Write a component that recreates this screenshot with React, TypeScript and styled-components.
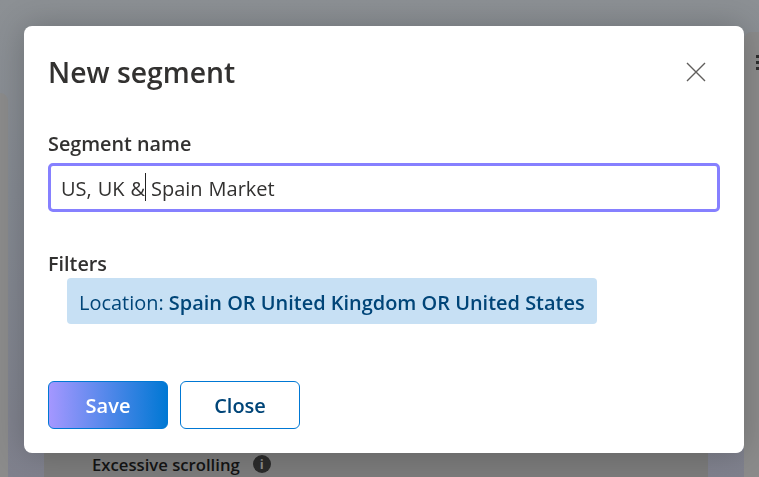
import React from 'react';
import styled, { createGlobalStyle } from 'styled-components';

const GlobalStyle = createGlobalStyle`
	html, body {
		margin: 0;
		height: 100%;
		overflow: hidden;
		background: #8a8e92;
		font-family: 'Open Sans', 'Noto Sans', 'Liberation Sans', sans-serif;
	}
`;

const Backdrop = styled.div`
	width: 759px;
	height: 477px;
	display: grid;
	grid-template-columns: 8px 664px 15px;
	column-gap: 36px;
	background: linear-gradient(180deg, #8c9094 0%, #858a92 40%, #7f818d 100%);
	overflow: hidden;
`;

const SideCard = styled.div<{ $top: number; $side: 'left' | 'right' }>`
	margin-top: ${(props) => props.$top}px;
	background: #8b8b8b;
	border-top-${(props) => (props.$side === 'left' ? 'right' : 'left')}-radius: 8px;
	position: relative;
`;

const MainCard = styled.div`
	margin-top: 300px;
	background: #7b7b7b;
	display: flex;
	flex-direction: column;
	justify-content: flex-end;
	padding: 0 0 1px 48px;
`;

const MetricRow = styled.div`
	display: flex;
	align-items: center;
	gap: 13px;
	height: 24px;
	color: #141414;
	font-size: 16.7px;
	font-weight: 600;
`;

const InfoDot = styled.span`
	width: 18px;
	height: 18px;
	border-radius: 50%;
	background: #2b2b2b;
	color: #8a8a8a;
	font-size: 13px;
	font-weight: 700;
	line-height: 18px;
	text-align: center;
`;

const MoreDots = styled.div`
	position: absolute;
	left: 12px;
	top: 23px;
	display: grid;
	row-gap: 3px;

	i {
		display: block;
		width: 4px;
		height: 3px;
		background: #2e2e2e;
	}
`;

const Modal = styled.div`
	position: fixed;
	left: 24px;
	top: 26px;
	width: 720px;
	height: 427px;
	box-sizing: border-box;
	padding: 24px;
	display: flex;
	flex-direction: column;
	background: #fff;
	border-radius: 8px;
	box-shadow: 0 0 32px rgba(0, 0, 0, 0.22);
	color: #323130;
`;

const ModalHeader = styled.div`
	display: flex;
	justify-content: space-between;
	align-items: center;
	height: 44px;
`;

const Title = styled.h2`
	margin: 0;
	font-size: 28.3px;
	font-weight: 600;
	line-height: 44px;
`;

const CloseIcon = styled.button`
	width: 20px;
	height: 20px;
	margin-right: 14px;
	padding: 0;
	border: 0;
	background: none;
	display: flex;

	svg {
		width: 20px;
		height: 20px;
	}
`;

const Label = styled.label`
	display: block;
	font-size: 19.8px;
	font-weight: 600;
	line-height: 26px;
`;

const NameField = styled.div`
	margin-top: 37px;
`;

const InputWrap = styled.div`
	position: relative;
	margin-top: 6px;
`;

const NameInput = styled.input`
	width: 100%;
	height: 49px;
	box-sizing: border-box;
	padding: 2px 10px 0;
	border: 3px solid #8680ff;
	border-radius: 5px;
	outline: none;
	font-family: inherit;
	font-size: 20px;
	word-spacing: 0.75px;
	color: #323130;
`;

const Caret = styled.span`
	position: absolute;
	left: 97px;
	top: 10px;
	width: 1px;
	height: 28px;
	background: #222;
`;

const Filters = styled.div`
	margin-top: 39px;
`;

const Chip = styled.div`
	width: fit-content;
	margin: 1px 0 0 19px;
	padding: 2px 12px 0;
	height: 44px;
	line-height: 46px;
	background: #c7e0f4;
	border-radius: 4px;
	color: #004578;
	font-size: 19.95px;

	b {
		font-weight: 600;
	}
`;

const Actions = styled.div`
	display: flex;
	gap: 12px;
	margin-top: auto;
`;

const Button = styled.button<{ $primary?: boolean }>`
	width: 120px;
	height: 48px;
	padding: 0;
	border: 1px solid #0078d4;
	border-radius: 6px;
	background: ${(props) => (props.$primary ? 'linear-gradient(90deg, #a497ff 0%, #0078d4 100%)' : '#fff')};
	color: ${(props) => (props.$primary ? '#fff' : '#004578')};
	font-family: inherit;
	font-size: 20px;
	font-weight: 600;
`;

const App: React.FC = () => {
	return (
		<>
			<GlobalStyle />
			<Backdrop>
				<SideCard $top={93} $side="left" />
				<MainCard>
					<MetricRow>
						Excessive scrolling
						<InfoDot>i</InfoDot>
					</MetricRow>
				</MainCard>
				<SideCard $top={32} $side="right">
					<MoreDots>
						<i />
						<i />
						<i />
					</MoreDots>
				</SideCard>
			</Backdrop>
			<Modal>
				<ModalHeader>
					<Title>New segment</Title>
					<CloseIcon aria-label="Close">
						<svg viewBox="0 0 20 20" fill="none" stroke="#605e5c" strokeWidth="1.4">
							<path d="M1 1l18 18M19 1L1 19" />
						</svg>
					</CloseIcon>
				</ModalHeader>
				<NameField>
					<Label>Segment name</Label>
					<InputWrap>
						<NameInput readOnly value="US, UK & Spain Market" />
						<Caret />
					</InputWrap>
				</NameField>
				<Filters>
					<Label>Filters</Label>
					<Chip>
						Location: <b>Spain OR United Kingdom OR United States</b>
					</Chip>
				</Filters>
				<Actions>
					<Button $primary>Save</Button>
					<Button>Close</Button>
				</Actions>
			</Modal>
		</>
	);
};

export default App;
